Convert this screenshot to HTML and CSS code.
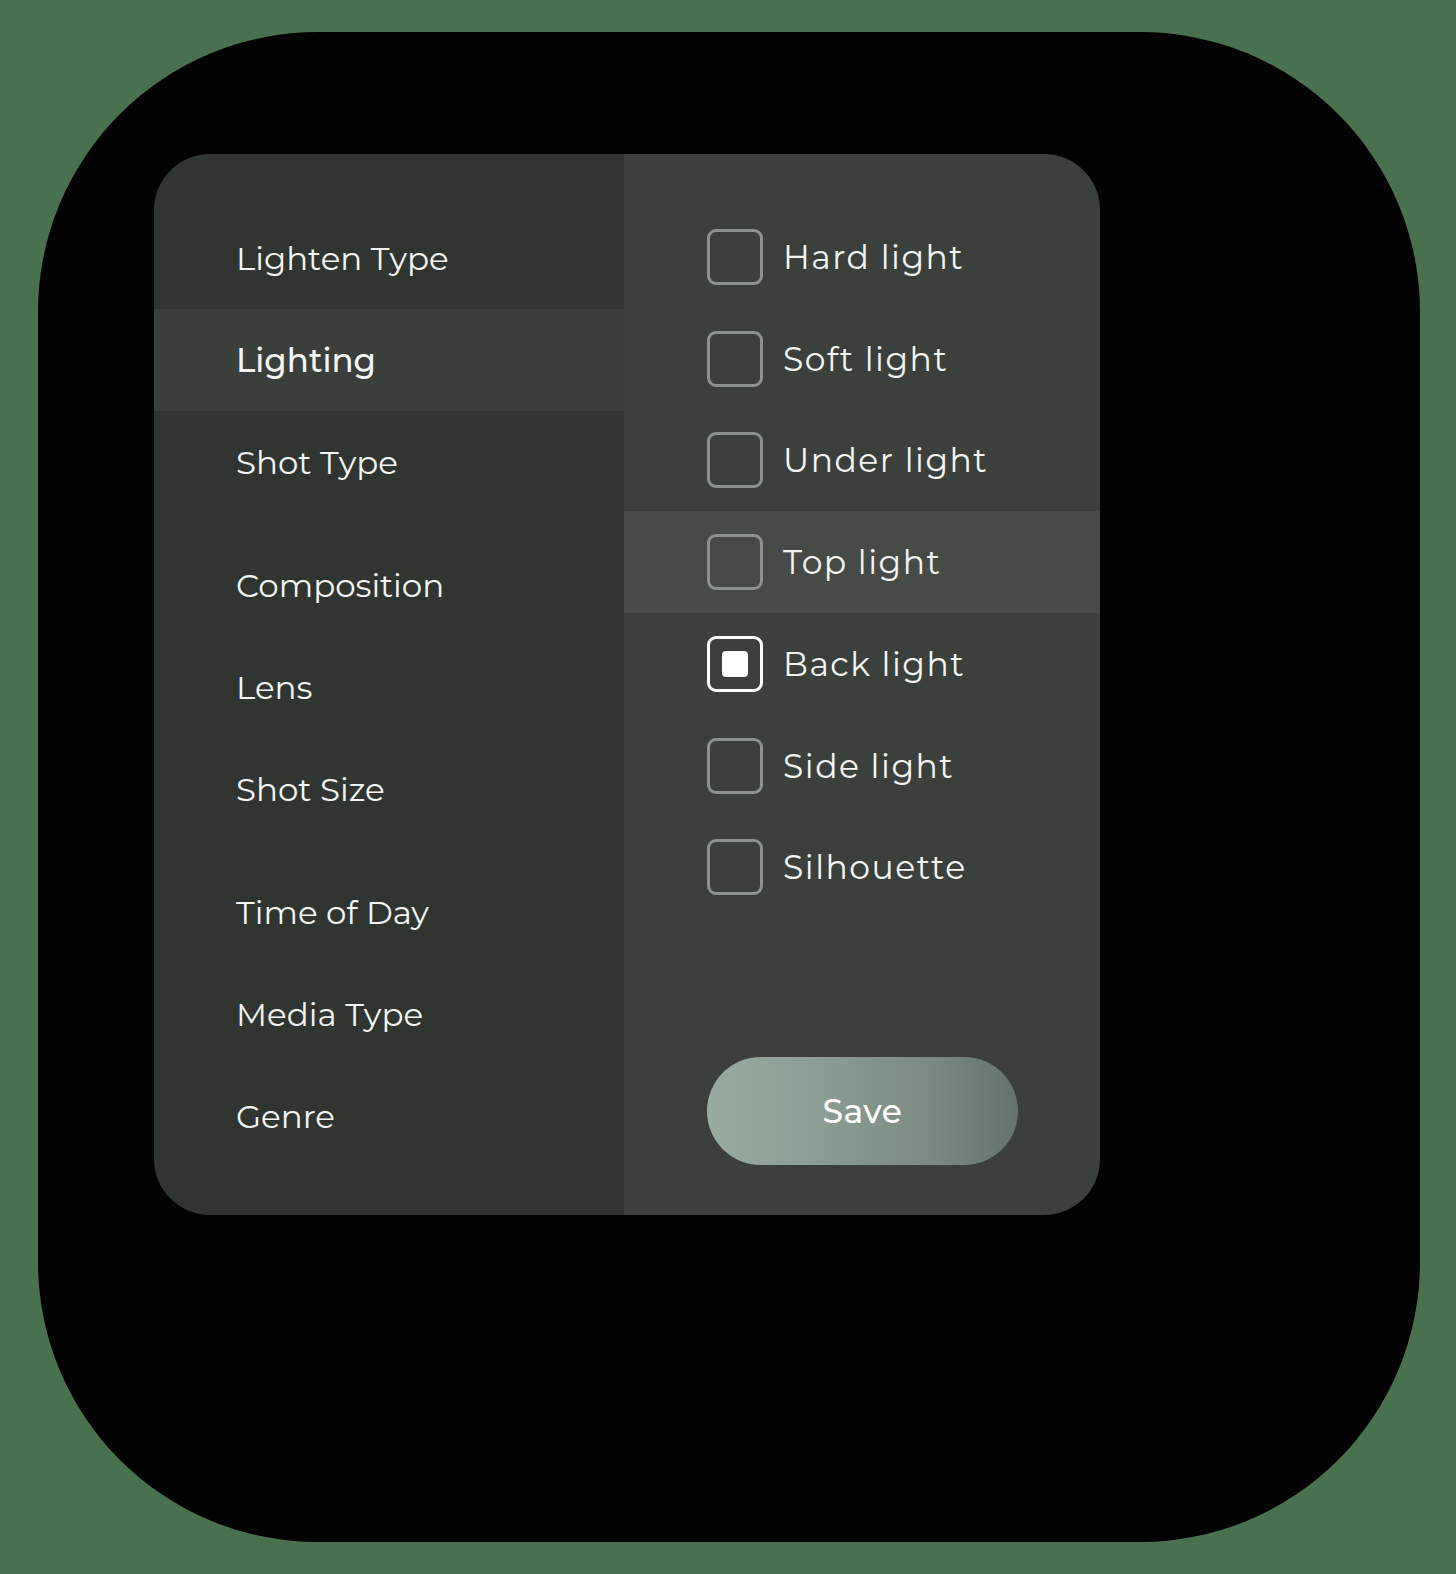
FILE: index.html
```html
<!DOCTYPE html>
<html lang="en">
<head>
<meta charset="utf-8">
<title>Lighting filter</title>
<link rel="stylesheet" href="styles.css">
</head>
<body>
<div class="frame">
  <div class="panel">
    <nav class="nav">
      <div class="group">
        <div class="nav-item">Lighten Type</div>
        <div class="nav-item active">Lighting</div>
        <div class="nav-item">Shot Type</div>
      </div>
      <div class="group">
        <div class="nav-item">Composition</div>
        <div class="nav-item">Lens</div>
        <div class="nav-item">Shot Size</div>
      </div>
      <div class="group">
        <div class="nav-item">Time of Day</div>
        <div class="nav-item">Media Type</div>
        <div class="nav-item">Genre</div>
      </div>
    </nav>
    <section class="options">
      <div class="option"><span class="box"></span><span class="label">Hard light</span></div>
      <div class="option"><span class="box"></span><span class="label">Soft light</span></div>
      <div class="option"><span class="box"></span><span class="label">Under light</span></div>
      <div class="option hover"><span class="box"></span><span class="label">Top light</span></div>
      <div class="option"><span class="box checked"></span><span class="label">Back light</span></div>
      <div class="option"><span class="box"></span><span class="label">Side light</span></div>
      <div class="option"><span class="box"></span><span class="label">Silhouette</span></div>
      <button class="save">Save</button>
    </section>
  </div>
</div>
</body>
</html>
```
FILE: styles.css
```css
html, body {
  margin: 0;
  padding: 0;
}
body {
  width: 1456px;
  height: 1574px;
  background: #4a714e;
  font-family: "Montserrat", "Open Sans", "DejaVu Sans", sans-serif;
  color: #f4f5f3;
  overflow: hidden;
}
.frame {
  box-sizing: border-box;
  margin: 32px 0 0 38px;
  width: 1382px;
  height: 1510px;
  background: #030303;
  border-radius: 280px;
  padding: 122px 0 0 116px;
}
.panel {
  width: 946px;
  height: 1061px;
  border-radius: 56px;
  overflow: hidden;
  display: grid;
  grid-template-columns: 470px 476px;
}
.nav {
  background: #313531;
  padding: 53px 0 48px;
  display: flex;
  flex-direction: column;
  gap: 21px;
}
.nav-item {
  height: 102px;
  display: flex;
  align-items: center;
  padding-left: 82px;
  font-size: 32.5px;
  font-weight: 400;
}
.nav-item.active {
  background: #3b3f3c;
  font-weight: 500;
}
.options {
  background: #3b403c;
  padding: 52px 0 50px;
  display: flex;
  flex-direction: column;
}
.option {
  height: 101.75px;
  display: flex;
  align-items: center;
  padding-left: 83px;
  gap: 20px;
  font-size: 33px;
  letter-spacing: 1.5px;
}
.option.hover {
  background: #474b47;
}
.box {
  box-sizing: border-box;
  width: 56px;
  height: 56px;
  border: 3px solid #8c928d;
  border-radius: 9px;
  display: flex;
  align-items: center;
  justify-content: center;
  flex: none;
}
.box.checked {
  border-color: #ffffff;
}
.box.checked::after {
  content: "";
  width: 26px;
  height: 26px;
  border-radius: 4px;
  background: #ffffff;
}
.save {
  margin: auto 0 0 83px;
  width: 311px;
  height: 108px;
  border: none;
  border-radius: 54px;
  background: linear-gradient(90deg, #98ab9f 0%, #8b9e93 35%, #7a8c82 70%, #64746b 100%);
  color: #ffffff;
  font-family: inherit;
  font-size: 33px;
  font-weight: 500;
  letter-spacing: 0.5px;
}
```
